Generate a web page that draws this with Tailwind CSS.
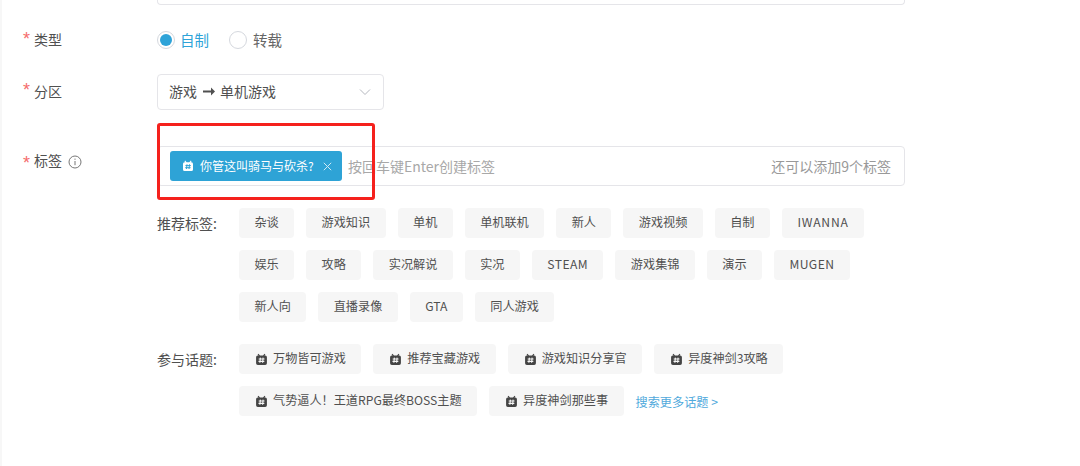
<!DOCTYPE html>
<html lang="zh">
<head>
<meta charset="utf-8">
<script src="https://cdn.jsdelivr.net/npm/@tailwindcss/browser@4"></script>
</head>
<body class="bg-white">
<div class="relative w-[1080px] h-[466px] overflow-hidden bg-white border-l-2 border-[#f7f7f7] font-['Noto_Sans_CJK_SC','Liberation_Sans',sans-serif] text-[#505050]">
  <div class="pl-[21px] w-[903px]">
    <!-- top input remnant -->
    <div class="ml-[134px] h-[5px] border border-t-0 border-[#e5e5e9] rounded-b-[4px]"></div>

    <!-- type -->
    <div class="flex items-center h-[24px] mt-[23px] text-[14px]">
      <span class="w-[11px] text-[#f56c6c] text-[18px] leading-none font-['Liberation_Sans'] -mt-[3px]">*</span>
      <span class="w-[123px] pb-[2px]">类型</span>
      <span class="flex items-center justify-center w-[18px] h-[18px] rounded-full border border-[#d5d8de]"><span class="block w-[12px] h-[12px] rounded-full bg-[#2ea3d8]"></span></span>
      <span class="ml-[5px] pb-[1px] text-[14.5px] text-[#2ea3d8]">自制</span>
      <span class="ml-[20px] w-[18px] h-[18px] rounded-full border border-[#d5d8de]"></span>
      <span class="ml-[6px] pb-[1px] text-[14.5px] text-[#666]">转载</span>
    </div>

    <!-- partition -->
    <div class="flex items-start mt-[22px] text-[14px]">
      <span class="w-[11px] text-[#f56c6c] text-[18px] font-['Liberation_Sans'] leading-none mt-[7px]">*</span>
      <span class="w-[123px] mt-[5px] leading-[24px]">分区</span>
      <div class="flex items-center justify-between w-[227px] h-[36px] px-[11px] border border-[#e5e5e9] rounded-[4px]">
        <span class="flex items-center pb-[1px]">游戏<svg class="w-[12px] h-[9px] mx-[5.500px]" viewBox="0 0 12 9"><path fill="#505050" d="M0 3.600h8V.5L12 4.500 8 8.500V5.400H0z"/></svg>单机游戏</span>
        <svg class="w-[12px] h-[8px] mr-[1px]" viewBox="0 0 12 8" fill="none" stroke="#b5b8bf" stroke-width="1"><path d="M1 1.500l5 5 5-5"/></svg>
      </div>
    </div>

    <!-- tags -->
    <div class="flex items-start mt-[36px] text-[14px]">
      <span class="w-[11px] text-[#f56c6c] text-[18px] font-['Liberation_Sans'] leading-none mt-[8px]">*</span>
      <span class="flex items-center w-[123px] mt-[2px] leading-[24px]"><span class="pb-[4px]">标签</span>
        <svg class="w-[14px] h-[14px] ml-[6px]" viewBox="0 0 14 14" fill="none" stroke="#777"><circle cx="7" cy="7" r="6"/><path d="M7 6v4.200M7 3.600v1.200"/></svg>
      </span>
      <div class="flex items-center flex-1 h-[40px] pl-[12px] pr-[13px] border border-[#e5e5e9] rounded-[4px]">
        <span class="flex items-center h-[30px] w-[172px] pl-[12px] bg-[#2ea3d6] rounded-[3px] text-white text-[12px]">
          <svg class="w-[12px] h-[12px] mr-[6px]" viewBox="0 0 12 12"><path fill="#fff" d="M3.200 .6 4.600 2.200h2.800L8.800 .6l.8.7-.9 1h.8A1.600 1.600 0 0 1 11 3.900v5.500A1.600 1.600 0 0 1 9.400 11H2.600A1.600 1.600 0 0 1 1 9.400V3.900a1.600 1.600 0 0 1 1.500-1.600h.8l-.9-1z"/><path stroke="#2ea3d6" stroke-width="1" fill="none" d="M5 4.300 4.500 9M7.500 4.300 7 9M3.400 5.600h5.400M3.200 7.700h5.400"/></svg>
          <span class="whitespace-nowrap pb-[1px]">你管这叫骑马与砍杀?</span>
          <svg class="w-[9px] h-[9px] ml-[9px]" viewBox="0 0 9 9" fill="none" stroke="#cfe9f5"><path d="M.8.800l7.400 7.400M8.200.800.800 8.200"/></svg>
        </span>
        <span class="ml-[6px] text-[#a8a8a8]">按回车键Enter创建标签</span>
        <span class="ml-auto text-[#999]">还可以添加9个标签</span>
      </div>
    </div>

    <!-- recommended -->
    <div class="flex items-start mt-[22px] ml-[134px]">
      <span class="w-[82px] text-[14px] leading-[20px] mt-[5px] whitespace-nowrap">推荐标签:</span>
      <div class="flex flex-wrap gap-x-[12px] gap-y-[12px] w-[666px] text-[12.15px]">
        <span class="flex items-center h-[30px] px-[15.45px] pb-[2px] bg-[#f6f6f6] rounded-[4px]">杂谈</span>
        <span class="flex items-center h-[30px] px-[15.45px] pb-[2px] bg-[#f6f6f6] rounded-[4px]">游戏知识</span>
        <span class="flex items-center h-[30px] px-[15.45px] pb-[2px] bg-[#f6f6f6] rounded-[4px]">单机</span>
        <span class="flex items-center h-[30px] px-[15.45px] pb-[2px] bg-[#f6f6f6] rounded-[4px]">单机联机</span>
        <span class="flex items-center h-[30px] px-[15.45px] pb-[2px] bg-[#f6f6f6] rounded-[4px]">新人</span>
        <span class="flex items-center h-[30px] px-[15.45px] pb-[2px] bg-[#f6f6f6] rounded-[4px]">游戏视频</span>
        <span class="flex items-center h-[30px] px-[15.45px] pb-[2px] bg-[#f6f6f6] rounded-[4px]">自制</span>
        <span class="flex items-center h-[30px] px-[15.45px] pb-[2px] bg-[#f6f6f6] rounded-[4px] tracking-[0.8px]">IWANNA</span>
        <span class="flex items-center h-[30px] px-[15.45px] pb-[2px] bg-[#f6f6f6] rounded-[4px]">娱乐</span>
        <span class="flex items-center h-[30px] px-[15.45px] pb-[2px] bg-[#f6f6f6] rounded-[4px]">攻略</span>
        <span class="flex items-center h-[30px] px-[15.45px] pb-[2px] bg-[#f6f6f6] rounded-[4px]">实况解说</span>
        <span class="flex items-center h-[30px] px-[15.45px] pb-[2px] bg-[#f6f6f6] rounded-[4px]">实况</span>
        <span class="flex items-center h-[30px] px-[15.45px] pb-[2px] bg-[#f6f6f6] rounded-[4px] tracking-[0.4px]">STEAM</span>
        <span class="flex items-center h-[30px] px-[15.45px] pb-[2px] bg-[#f6f6f6] rounded-[4px]">游戏集锦</span>
        <span class="flex items-center h-[30px] px-[15.45px] pb-[2px] bg-[#f6f6f6] rounded-[4px]">演示</span>
        <span class="flex items-center h-[30px] px-[15.45px] pb-[2px] bg-[#f6f6f6] rounded-[4px] tracking-[0.4px]">MUGEN</span>
        <span class="flex items-center h-[30px] px-[15.45px] pb-[2px] bg-[#f6f6f6] rounded-[4px]">新人向</span>
        <span class="flex items-center h-[30px] px-[15.45px] pb-[2px] bg-[#f6f6f6] rounded-[4px]">直播录像</span>
        <span class="flex items-center h-[30px] px-[15.45px] pb-[2px] bg-[#f6f6f6] rounded-[4px]">GTA</span>
        <span class="flex items-center h-[30px] px-[15.45px] pb-[2px] bg-[#f6f6f6] rounded-[4px]">同人游戏</span>
      </div>
    </div>

    <!-- topics -->
    <div class="flex items-start mt-[22px] ml-[134px]">
      <span class="w-[82px] text-[14px] leading-[20px] mt-[5px] whitespace-nowrap">参与话题:</span>
      <div class="flex flex-wrap items-center gap-x-[12px] gap-y-[12px] w-[666px] text-[12.15px]">
        <span class="flex items-center h-[30px] pl-[16px] pr-[15.500px] pb-[2px] gap-[5px] bg-[#f6f6f6] rounded-[4px]"><svg class="w-[13px] h-[13px] mt-[2px]" viewBox="0 0 12 12"><path fill="#444" d="M3.200 .6 4.600 2.200h2.800L8.800 .6l.8.7-.9 1h.8A1.600 1.600 0 0 1 11 3.900v5.500A1.600 1.600 0 0 1 9.400 11H2.600A1.600 1.600 0 0 1 1 9.400V3.900a1.600 1.600 0 0 1 1.500-1.600h.8l-.9-1z"/><path stroke="#f6f6f6" stroke-width="1" fill="none" d="M5 4.300 4.500 9M7.500 4.300 7 9M3.400 5.600h5.400M3.200 7.700h5.400"/></svg>万物皆可游戏</span>
        <span class="flex items-center h-[30px] pl-[16px] pr-[15.500px] pb-[2px] gap-[5px] bg-[#f6f6f6] rounded-[4px]"><svg class="w-[13px] h-[13px] mt-[2px]" viewBox="0 0 12 12"><path fill="#444" d="M3.200 .6 4.600 2.200h2.800L8.800 .6l.8.7-.9 1h.8A1.600 1.600 0 0 1 11 3.900v5.500A1.600 1.600 0 0 1 9.400 11H2.600A1.600 1.600 0 0 1 1 9.400V3.900a1.600 1.600 0 0 1 1.500-1.600h.8l-.9-1z"/><path stroke="#f6f6f6" stroke-width="1" fill="none" d="M5 4.300 4.500 9M7.500 4.300 7 9M3.400 5.600h5.400M3.200 7.700h5.400"/></svg>推荐宝藏游戏</span>
        <span class="flex items-center h-[30px] pl-[16px] pr-[15.500px] pb-[2px] gap-[5px] bg-[#f6f6f6] rounded-[4px]"><svg class="w-[13px] h-[13px] mt-[2px]" viewBox="0 0 12 12"><path fill="#444" d="M3.200 .6 4.600 2.200h2.800L8.800 .6l.8.7-.9 1h.8A1.600 1.600 0 0 1 11 3.900v5.500A1.600 1.600 0 0 1 9.400 11H2.600A1.600 1.600 0 0 1 1 9.400V3.900a1.600 1.600 0 0 1 1.500-1.600h.8l-.9-1z"/><path stroke="#f6f6f6" stroke-width="1" fill="none" d="M5 4.300 4.500 9M7.500 4.300 7 9M3.400 5.600h5.400M3.200 7.700h5.400"/></svg>游戏知识分享官</span>
        <span class="flex items-center h-[30px] pl-[16px] pr-[15.500px] pb-[2px] gap-[5px] bg-[#f6f6f6] rounded-[4px]"><svg class="w-[13px] h-[13px] mt-[2px]" viewBox="0 0 12 12"><path fill="#444" d="M3.200 .6 4.600 2.200h2.800L8.800 .6l.8.7-.9 1h.8A1.600 1.600 0 0 1 11 3.900v5.500A1.600 1.600 0 0 1 9.400 11H2.600A1.600 1.600 0 0 1 1 9.400V3.900a1.600 1.600 0 0 1 1.500-1.600h.8l-.9-1z"/><path stroke="#f6f6f6" stroke-width="1" fill="none" d="M5 4.300 4.500 9M7.500 4.300 7 9M3.400 5.600h5.400M3.200 7.700h5.400"/></svg>异度神剑3攻略</span>
        <span class="flex items-center h-[30px] pl-[16px] pr-[15.500px] pb-[2px] gap-[5px] bg-[#f6f6f6] rounded-[4px]"><svg class="w-[13px] h-[13px] mt-[2px]" viewBox="0 0 12 12"><path fill="#444" d="M3.200 .6 4.600 2.200h2.800L8.800 .6l.8.7-.9 1h.8A1.600 1.600 0 0 1 11 3.900v5.500A1.600 1.600 0 0 1 9.400 11H2.600A1.600 1.600 0 0 1 1 9.400V3.900a1.600 1.600 0 0 1 1.500-1.600h.8l-.9-1z"/><path stroke="#f6f6f6" stroke-width="1" fill="none" d="M5 4.300 4.500 9M7.500 4.300 7 9M3.400 5.600h5.400M3.200 7.700h5.400"/></svg><span>气势逼人&#xFF01;王道RPG最终BOSS主题</span></span>
        <span class="flex items-center h-[30px] pl-[16px] pr-[15.500px] pb-[2px] gap-[5px] bg-[#f6f6f6] rounded-[4px]"><svg class="w-[13px] h-[13px] mt-[2px]" viewBox="0 0 12 12"><path fill="#444" d="M3.200 .6 4.600 2.200h2.800L8.800 .6l.8.7-.9 1h.8A1.600 1.600 0 0 1 11 3.900v5.500A1.600 1.600 0 0 1 9.400 11H2.600A1.600 1.600 0 0 1 1 9.400V3.900a1.600 1.600 0 0 1 1.500-1.600h.8l-.9-1z"/><path stroke="#f6f6f6" stroke-width="1" fill="none" d="M5 4.300 4.500 9M7.500 4.300 7 9M3.400 5.600h5.400M3.200 7.700h5.400"/></svg>异度神剑那些事</span>
        <span class="text-[#4fa9dc] mt-[3px]">搜索更多话题 &gt;</span>
      </div>
    </div>
  </div>

  <!-- annotation -->
  <div class="absolute left-[155px] top-[123px] w-[218px] h-[77px] border-[3px] border-[#f5211d] rounded-[3px]"></div>
</div>
</body>
</html>
